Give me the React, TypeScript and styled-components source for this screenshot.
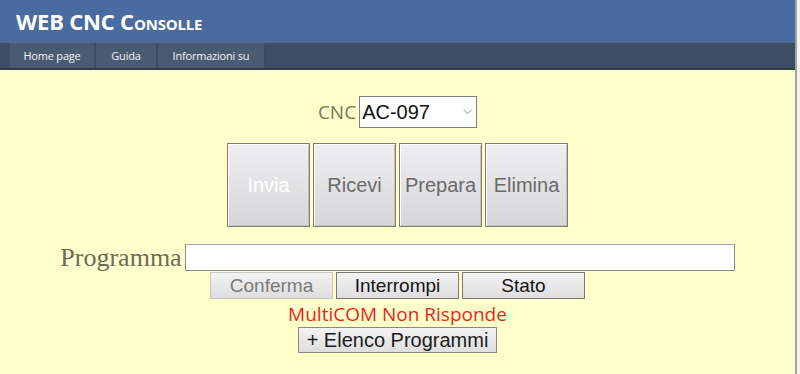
import React from "react";
import styled, { createGlobalStyle } from "styled-components";

const GlobalStyle = createGlobalStyle`
  html, body {
    margin: 0;
    padding: 0;
    background: #f4f4f0;
  }
  #root {
    width: 800px;
    height: 374px;
    overflow: hidden;
  }
`;

const Frame = styled.div`
  display: flex;
  width: 800px;
  height: 374px;
`;

const Page = styled.div`
  width: 795px;
  height: 100%;
  background: #ffffcc;
  display: flex;
  flex-direction: column;
`;

const Edge = styled.div`
  width: 2px;
  background: #a4a49c;
`;

const Header = styled.header`
  height: 42px;
  background: #4a6ba0;
  display: flex;
  align-items: center;
  padding-left: 16px;
  box-sizing: border-box;
`;

const Title = styled.h1`
  margin: 0;
  font-family: "Open Sans", "Noto Sans", sans-serif;
  font-weight: 700;
  font-size: 22px;
  font-variant: small-caps;
  color: #ffffff;
  letter-spacing: -0.2px;
`;

const NavBar = styled.nav`
  height: 28px;
  background: #3d4d64;
  border-top: 1px solid #55688a;
  border-bottom: 2px solid #2f3d44;
  box-sizing: border-box;
  display: flex;
  padding-left: 10px;
`;

const Tab = styled.a<{ $w: number }>`
  width: ${(p) => p.$w}px;
  height: 100%;
  background: #4a5a70;
  border-right: 2px solid #3d4b5f;
  display: flex;
  align-items: center;
  justify-content: center;
  font-family: "Open Sans", "Noto Sans", sans-serif;
  font-size: 11px;
  letter-spacing: -0.2px;
  color: #f2f4f8;
  text-decoration: none;
`;

const Main = styled.main`
  display: flex;
  flex-direction: column;
  align-items: center;
  padding-top: 26px;
`;

const CncRow = styled.div`
  display: flex;
  align-items: center;
  gap: 3px;
`;

const CncLabel = styled.label`
  font-family: "Open Sans", "Noto Sans", sans-serif;
  font-size: 19px;
  color: #7a7a58;
`;

const SelectBox = styled.div`
  position: relative;
  width: 118px;
  height: 32px;
`;

const Select = styled.select`
  appearance: none;
  -webkit-appearance: none;
  width: 100%;
  height: 100%;
  box-sizing: border-box;
  font-family: "Liberation Sans", Arial, sans-serif;
  font-size: 20px;
  color: #111;
  background: #fff;
  border: 1px solid #7f7f7f;
  border-radius: 0;
  padding: 0 0 0 2px;
  outline: none;
`;

const Chevron = styled.svg`
  position: absolute;
  right: 5px;
  top: 13px;
  width: 9px;
  height: 6px;
  pointer-events: none;
`;

const ActionRow = styled.div`
  display: flex;
  gap: 3px;
  margin-top: 15px;
`;

const BigButton = styled.button<{ $off?: boolean }>`
  width: 83px;
  height: 84px;
  padding: 0;
  font-family: "Liberation Sans", Arial, sans-serif;
  font-size: 20px;
  color: ${(p) => (p.$off ? "#ffffff" : "#6a6a6a")};
  background: linear-gradient(#efeff1, #d6d6d8);
  border: 1px solid #7e7e68;
  box-shadow: inset 1px 1px 0 #ffffff, inset -1px -1px 0 #c4c4c4;
  border-radius: 0;
`;

const ProgRow = styled.div`
  display: flex;
  align-items: flex-end;
  gap: 3px;
  margin-top: 17px;
`;

const ProgLabel = styled.label`
  font-family: "Liberation Serif", "Times New Roman", serif;
  font-size: 26px;
  line-height: 26px;
  color: #6c6c58;
`;

const TextInput = styled.input`
  width: 550px;
  height: 27px;
  box-sizing: border-box;
  border: 1px solid #8a8a8a;
  border-top-color: #a0a0a0;
  background: #fff;
  padding: 0 3px;
  font-size: 16px;
`;

const ControlRow = styled.div`
  display: flex;
  gap: 3px;
  margin-top: 1px;
`;

const SmallButton = styled.button<{ $off?: boolean; $w?: number }>`
  width: ${(p) => p.$w ?? 123}px;
  height: 27px;
  padding: 0;
  font-family: "Liberation Sans", Arial, sans-serif;
  font-size: 19px;
  color: ${(p) => (p.$off ? "#7a7a7a" : "#141414")};
  background: linear-gradient(#f3f3f3, #dedede);
  border: 1px solid ${(p) => (p.$off ? "#c9c9c0" : "#7a7a70")};
  border-radius: 0;
`;

const Status = styled.div`
  margin-top: 3px;
  font-family: "Open Sans", "Noto Sans", sans-serif;
  font-size: 19px;
  line-height: 25px;
  color: #e8251d;
`;

const ListButton = styled(SmallButton)`
  height: 26px;
  font-size: 20px;
  color: #1c1c1c;
  border-color: #8a8a80;
`;

export default function App() {
  return (
    <>
      <GlobalStyle />
      <Frame>
        <Page>
          <Header>
            <Title>WEB CNC Consolle</Title>
          </Header>
          <NavBar>
            <Tab $w={84} href="#">Home page</Tab>
            <Tab $w={60} href="#">Guida</Tab>
            <Tab $w={106} href="#">Informazioni su</Tab>
          </NavBar>
          <Main>
            <CncRow>
              <CncLabel>CNC</CncLabel>
              <SelectBox>
                <Select defaultValue="AC-097">
                  <option>AC-097</option>
                </Select>
                <Chevron viewBox="0 0 9 6">
                  <path d="M0.5 0.8 L4.5 4.8 L8.5 0.8" fill="none" stroke="#8a8a8a" strokeWidth="1" />
                </Chevron>
              </SelectBox>
            </CncRow>
            <ActionRow>
              <BigButton $off>Invia</BigButton>
              <BigButton>Ricevi</BigButton>
              <BigButton>Prepara</BigButton>
              <BigButton>Elimina</BigButton>
            </ActionRow>
            <ProgRow>
              <ProgLabel>Programma</ProgLabel>
              <TextInput type="text" />
            </ProgRow>
            <ControlRow>
              <SmallButton $off>Conferma</SmallButton>
              <SmallButton>Interrompi</SmallButton>
              <SmallButton>Stato</SmallButton>
            </ControlRow>
            <Status>MultiCOM Non Risponde</Status>
            <ListButton $w={199}>+ Elenco Programmi</ListButton>
          </Main>
        </Page>
        <Edge />
      </Frame>
    </>
  );
}
